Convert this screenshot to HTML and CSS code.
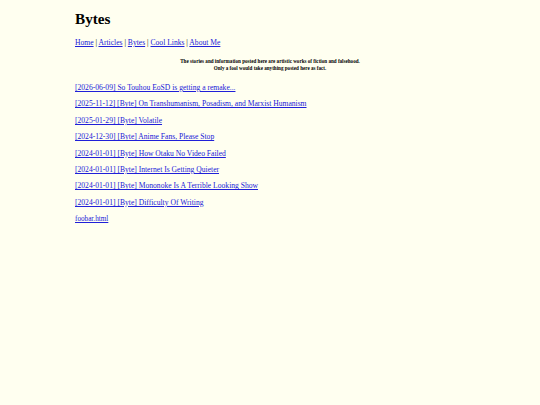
FILE: index.html
```html
<!DOCTYPE html>
<html>
<head>
<meta charset="utf-8">
<title>Bytes</title>
<link rel="stylesheet" href="styles.css">
</head>
<body>
<div class="page">
  <h1 class="title">Bytes</h1>
  <nav class="nav"><a href="#">Home</a> | <a href="#">Articles</a> | <a href="#">Bytes</a> | <a href="#">Cool Links</a> | <a href="#">About Me</a></nav>
  <p class="disclaimer">The stories and information posted here are artistic works of fiction and falsehood.<br>Only a fool would take anything posted here as fact.</p>
  <ul class="posts">
    <li><a href="#">[2026-06-09] So Touhou EoSD is getting a remake...</a></li>
    <li><a href="#">[2025-11-12] [Byte] On Transhumanism, Posadism, and Marxist Humanism</a></li>
    <li><a href="#">[2025-01-29] [Byte] Volatile</a></li>
    <li><a href="#">[2024-12-30] [Byte] Anime Fans, Please Stop</a></li>
    <li><a href="#">[2024-01-01] [Byte] How Otaku No Video Failed</a></li>
    <li><a href="#">[2024-01-01] [Byte] Internet Is Getting Quieter</a></li>
    <li><a href="#">[2024-01-01] [Byte] Mononoke Is A Terrible Looking Show</a></li>
    <li><a href="#">[2024-01-01] [Byte] Difficulty Of Writing</a></li>
    <li class="small"><a href="#">foobar.html</a></li>
  </ul>
</div>
</body>
</html>
```
FILE: styles.css
```css
html, body {
  margin: 0;
  padding: 0;
  background: #fffff0;
}
body {
  font-family: "Liberation Serif", "Times New Roman", serif;
  font-size: 7.6px;
  color: #000;
}
.page {
  width: 390px;
  margin: 0 auto;
  padding-top: 10px;
}
.title {
  font-size: 15.2px;
  font-weight: bold;
  margin: 0 0 10px 0;
  line-height: 18px;
}
.nav {
  line-height: 10px;
}
a {
  color: #2020d8;
}
.disclaimer {
  text-align: center;
  font-weight: bold;
  font-size: 5.1px;
  line-height: 7px;
  margin: 10px 0 0 0;
}
.posts {
  list-style: none;
  margin: 11px 0 0 0;
  padding: 0;
}
.posts li {
  line-height: 10px;
  margin-bottom: 6.4px;
}
.posts li.small a {
  font-size: 7.2px;
}
```
